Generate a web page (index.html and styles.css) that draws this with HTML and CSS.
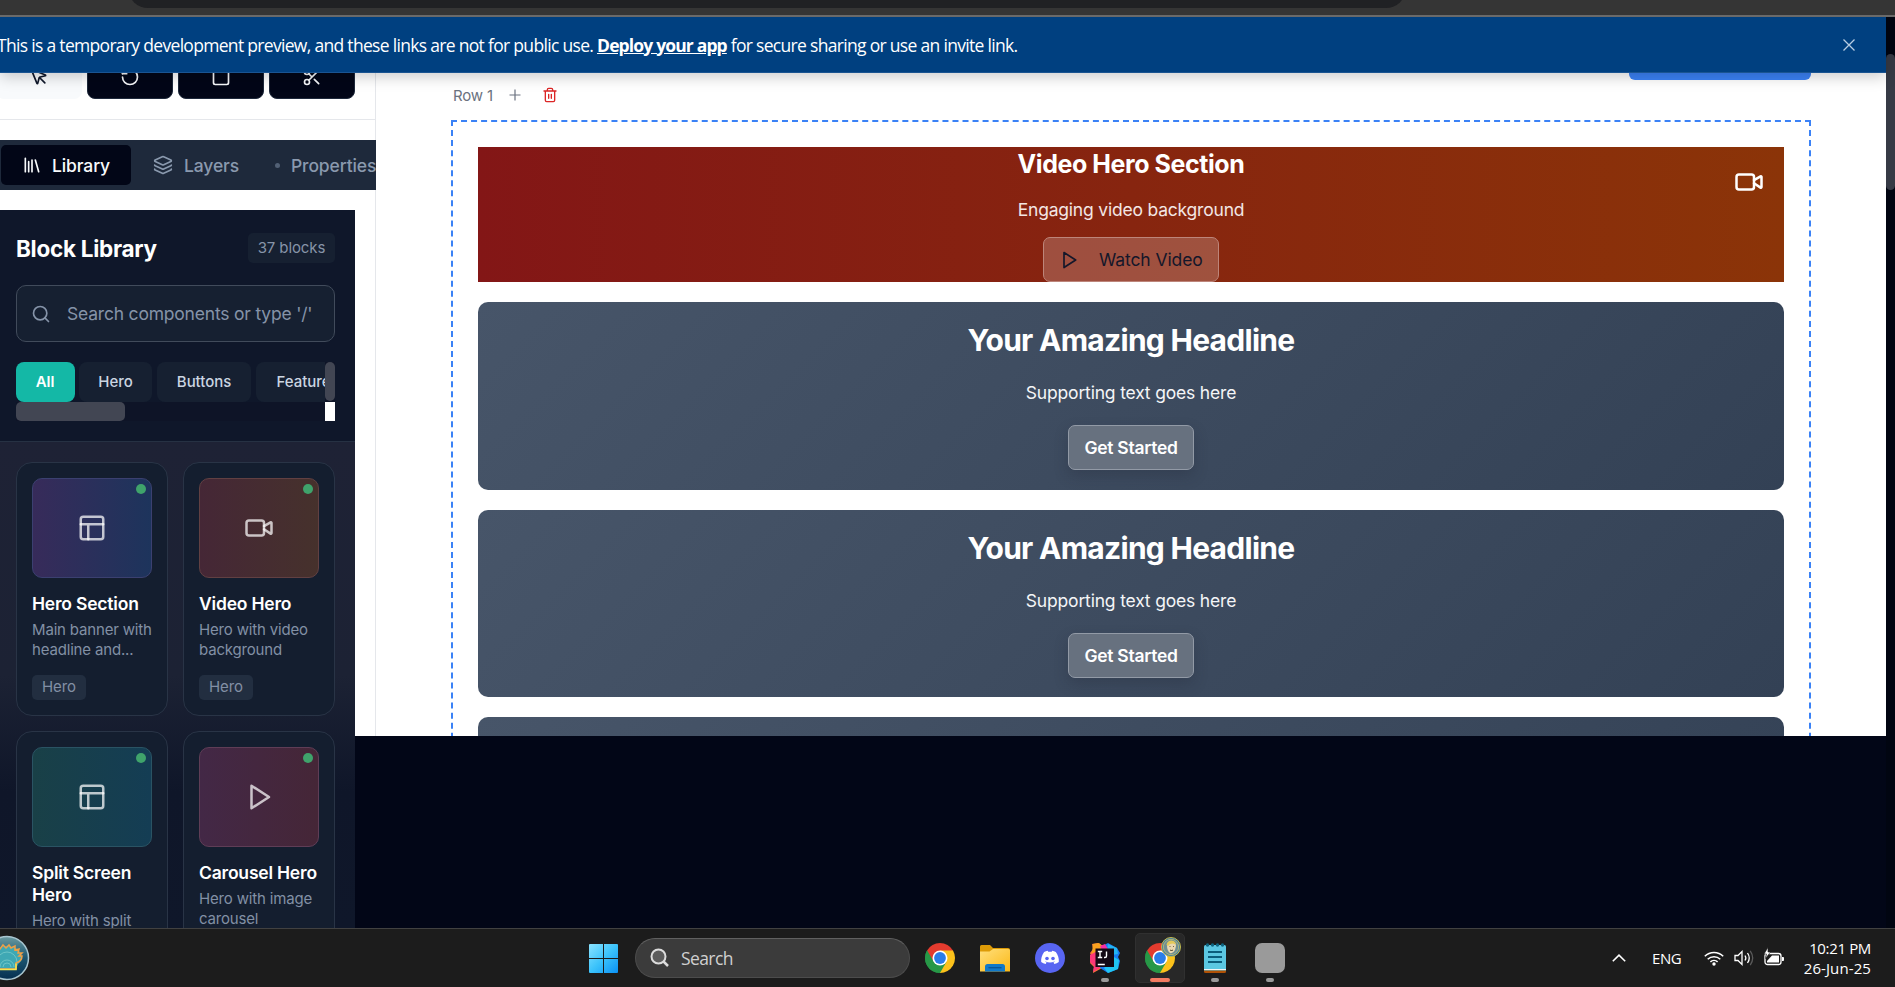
FILE: index.html
```html
<!DOCTYPE html>
<html lang="en">
<head>
<meta charset="utf-8">
<title>Page builder</title>
<link rel="stylesheet" href="styles.css">
</head>
<body>
<svg class="defs" width="0" height="0">
  <defs>
    <symbol id="i-layout" viewBox="0 0 24 24"><rect x="3" y="3" width="18" height="18" rx="2"/><path d="M3 9h18M9 21V9"/></symbol>
    <symbol id="i-video" viewBox="0 0 24 24"><path d="m16 13 5.223 3.482a.5.5 0 0 0 .777-.416V7.87a.5.5 0 0 0-.752-.432L16 10.5"/><rect x="2" y="6" width="14" height="12" rx="2"/></symbol>
    <symbol id="i-play" viewBox="0 0 24 24"><polygon points="6 3 20 12 6 21 6 3"/></symbol>
    <symbol id="i-chrome" viewBox="0 0 30 30">
      <path d="M15 15 2.01 7.5A15 15 0 0 1 27.99 7.5Z" fill="#e33b2e"/>
      <path d="M15 15 27.99 7.5A15 15 0 0 1 15 30Z" fill="#fcc21b"/>
      <path d="M15 15V30A15 15 0 0 1 2.01 7.5Z" fill="#279847"/>
      <path d="M15 7.5H27.99L21.5 18.8Z" fill="#fcc21b"/>
      <path d="M21.5 18.8 15 30 8.5 18.8Z" fill="#279847"/>
      <path d="M8.5 18.8 2.01 7.5 15 7.5Z" fill="#e33b2e"/>
      <path d="M2.01 7.5 8.5 18.8 15 30A15 15 0 0 1 2.01 7.5Z" fill="#279847"/>
      <circle cx="15" cy="15" r="7.5" fill="#fff"/><circle cx="15" cy="15" r="5.9" fill="#2a7de9"/>
    </symbol>
  </defs>
</svg>

<header class="chrome"><div class="omnibox"></div></header>

<div class="view">
  <div class="page">
    <div class="banner">
      <p class="banner-text">This is a temporary development preview, and these links are not for public use. <a>Deploy your app</a> for secure sharing or use an invite link.</p>
      <svg class="close" viewBox="0 0 12 12"><path d="M.5.5l11 11M11.500.5l-11 11"/></svg>
    </div>

    <div class="workspace">
      <aside class="sidebar">
        <div class="tools">
          <button class="tool tool-on"><svg class="ico" viewBox="0 0 24 24"><path d="M12.586 12.586 19 19"/><path d="M3.688 3.037a.497.497 0 0 0-.651.651l6.500 15.999a.501.501 0 0 0 .947-.062l1.569-6.083a2 2 0 0 1 1.448-1.479l6.124-1.579a.5.5 0 0 0 .063-.947z"/></svg></button>
          <button class="tool"><svg class="ico" viewBox="0 0 24 24"><path d="M3 12a9 9 0 1 0 9-9 9.750 9.750 0 0 0-6.740 2.740L3 8"/><path d="M3 3v5h5"/></svg></button>
          <button class="tool"><svg class="ico" viewBox="0 0 24 24"><rect x="3" y="3" width="18" height="18" rx="2"/></svg></button>
          <button class="tool"><svg class="ico" viewBox="0 0 24 24"><circle cx="6" cy="6" r="3"/><circle cx="6" cy="18" r="3"/><path d="M8.120 8.120 12 12M20 4 8.120 15.880M14.800 14.800 20 20"/></svg></button>
        </div>
        <nav class="tabs">
          <span class="tab tab-on"><svg class="ico" viewBox="0 0 24 24"><path d="m16 6 4 14M12 6v14M8 8v12M4 4v16"/></svg><span class="t-lib">Library</span></span>
          <span class="tab tab-layers"><svg class="ico" viewBox="0 0 24 24"><path d="M12.830 2.180a2 2 0 0 0-1.660 0L2.600 6.080a1 1 0 0 0 0 1.830l8.580 3.910a2 2 0 0 0 1.660 0l8.580-3.900a1 1 0 0 0 0-1.830z"/><path d="M2 12a1 1 0 0 0 .58.91l8.600 3.910a2 2 0 0 0 1.650 0l8.580-3.900A1 1 0 0 0 22 12"/><path d="M2 17a1 1 0 0 0 .58.91l8.600 3.910a2 2 0 0 0 1.650 0l8.580-3.900A1 1 0 0 0 22 17"/></svg><span>Layers</span></span>
          <span class="tab tab-props"><i class="dot"></i><span>Properties</span></span>
        </nav>

        <section class="library">
          <div class="lib-head">
            <div class="lib-title"><h2>Block Library</h2><span class="count">37 blocks</span></div>
            <div class="search"><svg class="ico" viewBox="0 0 24 24"><circle cx="11" cy="11" r="8"/><path d="m21 21-4.300-4.300"/></svg><span>Search components or type '/'</span></div>
            <div class="filters">
              <div class="chips"><span class="chip chip-all">All</span><span class="chip chip-hero">Hero</span><span class="chip chip-btn">Buttons</span><span class="chip chip-feat">Features</span></div>
              <i class="vbar"></i>
              <i class="hbar"></i>
              <i class="corner"></i>
            </div>
          </div>
          <div class="cards">
            <article class="card">
              <div class="thumb violet"><i class="live"></i><svg class="ico"><use href="#i-layout"/></svg></div>
              <h3>Hero Section</h3><p>Main banner with<br>headline and...</p><span class="tag">Hero</span>
            </article>
            <article class="card">
              <div class="thumb red"><i class="live"></i><svg class="ico"><use href="#i-video"/></svg></div>
              <h3>Video Hero</h3><p>Hero with video<br>background</p><span class="tag">Hero</span>
            </article>
            <article class="card">
              <div class="thumb teal"><i class="live"></i><svg class="ico"><use href="#i-layout"/></svg></div>
              <h3>Split Screen<br>Hero</h3><p>Hero with split</p>
            </article>
            <article class="card">
              <div class="thumb pink"><i class="live"></i><svg class="ico"><use href="#i-play"/></svg></div>
              <h3>Carousel Hero</h3><p>Hero with image<br>carousel</p>
            </article>
          </div>
        </section>
      </aside>

      <main class="canvas">
        <div class="actions"><span class="add"></span></div>
        <div class="row-head"><span class="row-name">Row 1</span>
          <svg class="plus" viewBox="0 0 12 12"><path d="M6 .5v11M.5 6h11"/></svg>
          <svg class="trash" viewBox="0 0 24 24"><path d="M3 6h18M19 6v14a2 2 0 0 1-2 2H7a2 2 0 0 1-2-2V6M8 6V4a2 2 0 0 1 2-2h4a2 2 0 0 1 2 2v2M10 11v6M14 11v6"/></svg>
        </div>
        <div class="row">
          <section class="video">
            <svg class="ico cam"><use href="#i-video"/></svg>
            <h2><span>Video Hero Section</span></h2>
            <p><span>Engaging video background</span></p>
            <button class="watch"><svg class="ico"><use href="#i-play"/></svg><span>Watch Video</span></button>
          </section>
          <section class="hero"><h1>Your Amazing Headline</h1><p>Supporting text goes here</p><button class="start">Get Started</button></section>
          <section class="hero"><h1>Your Amazing Headline</h1><p>Supporting text goes here</p><button class="start">Get Started</button></section>
          <section class="hero"></section>
        </div>
      </main>
    </div>
  </div>
  <div class="scroll"><i></i></div>
</div>

<footer class="taskbar">
  <div class="widget">
    <svg viewBox="0 0 46 46">
      <defs><linearGradient id="g1" x1="0" y1="0" x2="0" y2="1"><stop offset="0" stop-color="#6b9aa0"/><stop offset=".5" stop-color="#1c5670"/><stop offset="1" stop-color="#052f50"/></linearGradient></defs>
      <circle cx="23" cy="23" r="21.500" fill="url(#g1)" stroke="#a9c6d0" stroke-width="1.500"/>
      <path d="M14 34V30q-5-3-5-9 1-5 5-7 5-4 11-3 9 1 12 8 3 6-3 10l-2 5Z" fill="#3fa8b4"/>
      <path d="M14 34h18v-6q6-2 6-7l-3 0 3-3-4 0 1-4-4 1 0-4-4 2-2-3-3 3-3-3-3 4-3-2" fill="none" stroke="#f0a046" stroke-width="1.500"/>
      <path d="M14 34.500h18v-6" fill="none" stroke="#f6e650" stroke-width="1.500"/>
      <path d="M16 32a7 7 0 0 1 14 0M19 32a4 4 0 0 1 8 0M13 27a10 10 0 0 1 20 0" fill="none" stroke="#7fd0cf" stroke-width=".7"/>
    </svg>
  </div>
  <div class="start-menu">
    <svg class="win" viewBox="0 0 29 29"><defs><linearGradient id="w" x1="0" y1="0" x2="1" y2="1"><stop offset="0" stop-color="#8be3ff"/><stop offset=".5" stop-color="#3cc3fb"/><stop offset="1" stop-color="#0a91f5"/></linearGradient></defs><path d="M0 1q0-1 1-1h13v14H0ZM15 0h13q1 0 1 1v13H15ZM0 15h14v14H1q-1 0-1-1ZM15 15h14v13q0 1-1 1H15Z" fill="url(#w)"/></svg>
    <div class="tsearch"><svg viewBox="0 0 20 20"><circle cx="8.500" cy="8.500" r="7" fill="#5c5c5c" stroke="#dcdcdc" stroke-width="2"/><path d="m13.500 13.500 4.500 4.500" stroke="#dcdcdc" stroke-width="2.500"/></svg><span>Search</span></div>
  </div>
  <div class="apps">
    <span class="app"><svg viewBox="0 0 30 30"><use href="#i-chrome"/></svg></span>
    <span class="app"><svg viewBox="0 0 30 30"><defs><linearGradient id="f" x1="0" y1="0" x2="1" y2="1"><stop offset="0" stop-color="#ffdf7c"/><stop offset="1" stop-color="#fbb917"/></linearGradient></defs><path d="M0 3.500Q0 2 1.500 2H10l3 3h15q2 0 2 2v6H0Z" fill="#dd9b07"/><path d="M0 8.500h9.500L13 6h15.500Q30 6 30 7.500V28.500H0Z" fill="url(#f)"/><path d="M5 28.500v-5q0-2.500 2.500-2.500h15q2.500 0 2.500 2.500v5Z" fill="#1179c9"/><path d="M8.500 24.700h13" stroke="#0a5596" stroke-width="1.300"/></svg></span>
    <span class="app"><svg viewBox="0 0 30 30"><circle cx="15" cy="15" r="15" fill="#5865f2"/><path d="M20.800 8.900a14 14 0 0 0-3.600-1.100l-.5 1a13 13 0 0 0-3.500 0l-.5-1a14 14 0 0 0-3.600 1.100C6.800 12.300 5.900 15.600 6.200 18.900a14.500 14.500 0 0 0 4.400 2.200l1-1.600-1.500-.7.4-.3a10.400 10.400 0 0 0 9 0l.4.300-1.500.7 1 1.600a14.500 14.500 0 0 0 4.400-2.200c.4-3.800-.9-7-3-10Z" fill="#fff"/><circle cx="12" cy="15.500" r="1.800" fill="#5865f2"/><circle cx="18" cy="15.500" r="1.800" fill="#5865f2"/></svg></span>
    <span class="app"><svg viewBox="0 0 30 30"><path d="M2 1 8 0l5 3 2 12-3 10-9 5 1-6-4-4 2-5-2-5 3-4Z" fill="#fb7a35"/><path d="M3 1 9 0l6 5-1 8-9 2-3-5Z" fill="#f9a11f"/><path d="m0 12 7-4 6 8-3 9-7 4 1-6-4-4Z" fill="#fc3878"/><path d="M12 3 18 0l9 5 3 5-2 4 2 4-2 8-10 4-8-5Z" fill="#177bf2"/><path d="m18 1 9 4 1 6-6 1-5-5Z" fill="#22b4f4"/><path d="m24 14 5 3-1 9-10 4-4-5Z" fill="#20c5f2"/><path d="M10 3 15 1l3 5-4 5Z" fill="#f52fa3"/><rect x="5.500" y="5.500" width="18.500" height="18.500" fill="#130914"/><path d="M7.800 8.500h4.400M10 8.500v6M7.800 14.500h4.400M16.500 8.500v4.500q0 1.500-1.500 1.500h-1M7.800 21.500h7" stroke="#fff" stroke-width="1.400" fill="none"/></svg><i class="run"></i></span>
    <span class="app app-on"><svg viewBox="0 0 30 30"><use href="#i-chrome"/></svg><svg class="avatar" viewBox="0 0 20 20"><circle cx="10" cy="10" r="9.500" fill="#3e7aa6" stroke="#c3bb4e" stroke-width="1"/><circle cx="10" cy="10" r="7.700" fill="#6f8e93" stroke="#d7cc68" stroke-width=".7"/><path d="M6 8q1-4 5-4 4 1 4 5l-1 4q-2 4-5 3-3-2-3-8Z" fill="#ead7b0"/><path d="M5.500 8Q6 3.500 10.500 3.500q4 .5 4.500 4l-3-1-3 .5-2 2Z" fill="#e2c85a"/><path d="M8.500 9.500h1M12 9.500h1M9 13q1.500 1 3 0" stroke="#55492f" stroke-width=".8"/></svg><i class="run run-on"></i></span>
    <span class="app"><svg viewBox="0 0 30 30"><rect x="4" y="2" width="22" height="27" rx="1.500" fill="#5cc7e2"/><path d="M4 26h22v1H4Z" fill="#f4f4f4"/><path d="M4 27.500h22v1q0 1.500-1.500 1.500h-19Q4 30 4 28.500Z" fill="#b05206"/><path d="M8 9h14M8 14h14M8 19h14" stroke="#0b5d7c" stroke-width="1.800"/><g fill="#0f6480"><circle cx="7.500" cy="2" r="1.700"/><circle cx="12.500" cy="2" r="1.700"/><circle cx="17.500" cy="2" r="1.700"/><circle cx="22.500" cy="2" r="1.700"/></g></svg><i class="run"></i></span>
    <span class="app"><i class="blank"></i><i class="run"></i></span>
  </div>
  <div class="tray">
    <svg class="chev" viewBox="0 0 14 8"><path d="m.8 7.200 6.200-6 6.200 6"/></svg>
    <span class="lang">ENG</span>
    <svg class="wifi" viewBox="0 0 20 16"><path d="M.8 6.300a13 13 0 0 1 18.400 0M3.700 9.200a9 9 0 0 1 12.600 0M6.400 11.900a5.200 5.200 0 0 1 7.200 0"/><circle cx="10" cy="14" r="1.700"/></svg>
    <svg class="vol" viewBox="0 0 20 18"><path d="M1 6.500h3L8 2.500v13l-4-4H1Z"/><path d="M11 6.500q1.700 2.500 0 5M13.500 4q3.500 5 0 10"/><path class="dim" d="M16.200 1.800q5 7.200 0 14.400"/></svg>
    <svg class="bat" viewBox="0 0 20 18"><rect x="1" y="4.500" width="16" height="11" rx="2.500"/><path class="fill" d="M3 13.500V12l5-5.500h7v7H3ZM18 8h1.200q.8 0 .8 1v2q0 1-.8 1H18Z"/><path class="bolt" d="M4-1.500 0 5h2.500L1.500 9.500 6.500 3H4Z"/></svg>
    <div class="clock"><span>10:21 PM</span><span class="date">26-Jun-25</span></div>
  </div>
</footer>
</body>
</html>
```
FILE: styles.css
```css
* { box-sizing: border-box; }
body { margin: 0; width: 1895px; height: 987px; overflow: hidden; display: flex; flex-direction: column; background: #020617; font-family: Inter, "Liberation Sans", sans-serif; }
h1, h2, h3, p { margin: 0; }
button { margin: 0; padding: 0; border: 0; font: inherit; }
.defs { position: absolute; }
.ico { width: 20px; height: 20px; flex: none; fill: none; stroke: currentColor; stroke-width: 2; stroke-linecap: round; stroke-linejoin: round; }

/* Browser frame */
.chrome { flex: none; height: 17px; background: #353535; border-bottom: 2px solid #6a6a6a; overflow: hidden; padding-left: 128px; }
.omnibox { width: 1278px; height: 40px; margin-top: -32px; border-radius: 20px; background: #202124; }
.view { flex: none; height: 911px; display: flex; overflow: hidden; }
.page { position: relative; width: 1886px; }
.scroll { width: 9px; padding-top: 37px; background: #010511; }
.scroll i { display: block; height: 136px; border-radius: 5px; background: #363a45; }

.banner { position: absolute; z-index: 5; top: 0; left: 0; width: 1886px; height: 56px; display: flex; align-items: center; justify-content: space-between; padding: 0 31px 0 0; background: #004080; border-bottom: 1px solid #1a5491; box-shadow: 0 4px 14px rgba(0,0,0,.2); color: #fff; }
.banner-text { margin-left: -3px; font: 17.500px "Open Sans", "Noto Sans", sans-serif; letter-spacing: -.69px; white-space: nowrap; }
.banner-text a { font-weight: 700; letter-spacing: -.85px; text-decoration: underline; }
.close { width: 12px; height: 12px; stroke: #b9cde2; stroke-width: 1.300; fill: none; }

.workspace { display: flex; width: 1886px; height: 719px; background: #fff; }

/* Sidebar */
.sidebar { flex: none; width: 376px; height: 719px; border-right: 1px solid #e5e7eb; }
.tools { display: flex; gap: 5px; height: 103px; width: 375px; padding: 37px 0 20px; border-bottom: 1px solid #e5e7eb; overflow: hidden; }
.tool { flex: none; width: 86px; height: 45px; display: flex; align-items: center; justify-content: center; border-radius: 8px; background: #020617; border: 1px solid #1e293b; color: #f8fafc; }
.tool-on { margin-left: -4px; background: #f8fafc; border-color: #f8fafc; color: #0f172a; }
.tabs { display: flex; align-items: center; width: 376px; height: 50px; margin-top: 20px; padding-left: 1px; background: #1e293b; overflow: hidden; font-size: 17.500px; font-weight: 500; letter-spacing: -.12px; color: #8a99ae; white-space: nowrap; }
.tab { flex: none; display: flex; align-items: center; height: 40px; }
.tab-on { width: 130px; padding-left: 21px; gap: 10px; background: #020617; border-radius: 5px; color: #f8fafc; }
.tab-layers { width: 144px; padding-left: 22px; gap: 11px; }
.tab-props { gap: 11px; }
.dot { width: 5px; height: 5px; border-radius: 50%; background: #526075; }

.library { width: 355px; height: 718px; margin-top: 20px; overflow: hidden; background: #0f172a; }
.lib-head { height: 232px; padding: 23px 20px 0 16px; border-bottom: 1px solid #263143; }
.lib-title { display: flex; align-items: center; justify-content: space-between; height: 30px; }
.lib-title h2 { font-size: 22.500px; font-weight: 700; letter-spacing: -.28px; color: #fff; }
.count { width: 87px; height: 30px; line-height: 29px; border-radius: 5px; text-align: center; font-size: 15px; letter-spacing: -.1px; color: #8794a8; background: #162031; }
.search { display: flex; align-items: center; gap: 16px; height: 57px; margin-top: 22px; padding-left: 14px; border: 1px solid #414b5b; border-radius: 10px; background: #162031; color: #8593a8; font-size: 17.500px; letter-spacing: -.2px; white-space: nowrap; }
.filters { display: grid; grid-template-columns: 309px 10px; grid-template-rows: 40px 19px; margin-top: 20px; background: #0e1427; }
.chips { display: flex; overflow: hidden; background: #0f172a; font-size: 15px; font-weight: 500; letter-spacing: -.05px; color: #cbd5e1; }
.chip { flex: none; height: 40px; line-height: 39px; border-radius: 8px; background: #162031; text-align: center; }
.chip-all { width: 59px; margin-right: 4px; padding-right: 1px; background: #14b8a6; color: #fff; font-weight: 600; }
.chip-hero { width: 73px; margin-right: 5px; }
.chip-btn { width: 94px; margin-right: 5px; }
.chip-feat { width: 103px; }
.vbar { height: 39px; border-radius: 5px; background: #424653; }
.hbar { width: 109px; border-radius: 5px; background: #424653; }
.corner { background: #fff; }

.cards { display: grid; grid-template-columns: 152px 152px; grid-auto-rows: 254px; gap: 15px; height: 486px; padding: 20px 20px 0 16px; background: linear-gradient(#1e2235 0, #1c2234 48%, #0f1629 72%, #0f172a 100%); }
.card { padding: 15px; border: 1px solid #293446; border-radius: 16px; background: #141e2f; }
.card:nth-child(n+3) { height: 280px; }
.thumb { position: relative; display: flex; align-items: center; justify-content: center; width: 120px; height: 100px; border: 1px solid; border-radius: 10px; color: rgba(255,255,255,.72); }
.thumb .ico { width: 30px; height: 30px; }
.violet { background: linear-gradient(90deg, #372b5a, #1d345c); border-color: #3b4070; }
.red { background: linear-gradient(90deg, #452736, #46312c); border-color: #614042; }
.teal { background: linear-gradient(90deg, #194047, #143d54); border-color: #2a5363; }
.pink { background: linear-gradient(90deg, #432846, #452637); border-color: #5f3d56; }
.live { position: absolute; top: 5px; right: 5px; width: 10px; height: 10px; border-radius: 50%; background: #3fa36b; }
.card h3 { margin-top: 15px; font-size: 17.500px; line-height: 22px; font-weight: 600; letter-spacing: -.2px; color: #fff; white-space: nowrap; }
.card p { margin-top: 5px; font-size: 15px; line-height: 20px; letter-spacing: -.17px; color: #8290a5; white-space: nowrap; }
.tag { display: block; width: 54px; height: 25px; margin-top: 15px; line-height: 24px; border-radius: 5px; text-align: center; font-size: 15px; letter-spacing: -.1px; color: #8290a5; background: #222e40; }

/* Canvas */
.canvas { width: 1510px; height: 719px; padding: 0 75px; overflow: hidden; }
.actions { display: flex; justify-content: flex-end; height: 63px; }
.add { width: 182px; border-radius: 6px; background: #3b82f6; }
.row-head { display: flex; align-items: center; height: 30px; margin-bottom: 10px; padding-left: 2px; color: #6b7280; }
.row-name { width: 56px; font-size: 15px; letter-spacing: -.15px; }
.plus { width: 12px; height: 12px; fill: none; stroke: #6b7280; stroke-width: 1.200; }
.trash { width: 16px; height: 16px; margin-left: 21px; fill: none; stroke: #dc2626; stroke-width: 2; stroke-linecap: round; stroke-linejoin: round; }
.row { display: flex; flex-direction: column; gap: 20px; height: 900px; padding: 25px; border: 2px dashed #3b82f6; }
.video { position: relative; flex: none; height: 135px; display: flex; flex-direction: column; align-items: center; background: linear-gradient(90deg, #831616, #8b3408); color: #fff; }
.video h2 { height: 35px; line-height: 35px; font-size: 25px; font-weight: 700; letter-spacing: -.43px; }
.video p { height: 25px; margin-top: 15px; line-height: 25px; font-size: 17.500px; letter-spacing: -.2px; color: #f3e6e4; }
.cam { position: absolute; top: 20px; right: 20px; width: 30px; height: 30px; }
.watch { display: flex; align-items: center; width: 176px; height: 45px; margin-top: 15px; padding-left: 15px; border: 1px solid #bd857a; border-radius: 7px; background: rgba(255,255,255,.2); color: #14172a; font-size: 17.500px; letter-spacing: -.1px; }
.watch span { margin-left: 20px; }
.hero { flex: none; height: 188px; display: flex; flex-direction: column; align-items: center; border-radius: 10px; background: linear-gradient(135deg, #475569, #334155); color: #fff; }
.hero + .hero { height: 187px; }
.hero h1 { margin-top: 19px; height: 38px; line-height: 38px; font-size: 30px; font-weight: 700; letter-spacing: -.72px; }
.hero p { margin-top: 21px; height: 25px; line-height: 25px; font-size: 17.500px; letter-spacing: -.18px; color: #f4f5f7; }
.start { width: 126px; height: 45px; margin-top: 20px; border: 1px solid #929aa6; border-radius: 7px; background: #67717f; box-shadow: 0 6px 14px rgba(30,35,50,.25); color: #fff; font-size: 17.500px; font-weight: 600; letter-spacing: -.28px; }

/* Taskbar */
.taskbar { flex: none; display: flex; align-items: center; height: 59px; background: #1c1c1c; border-top: 1px solid #414141; color: #fff; font-family: "Open Sans", "Noto Sans", sans-serif; }
.widget { width: 589px; height: 46px; }
.widget svg { width: 46px; height: 46px; margin-left: -16px; }
.start-menu { display: flex; align-items: center; gap: 17px; }
.win { width: 29px; height: 29px; }
.tsearch { display: flex; align-items: center; width: 275px; height: 40px; padding-left: 14px; gap: 11px; border: 1px solid #4c4c4c; border-top-color: #606060; border-radius: 20px; background: #3b3b3b; color: #d0d0d0; font-size: 17.500px; letter-spacing: -.6px; }
.tsearch svg { width: 20px; height: 20px; }
.apps { display: flex; gap: 5px; margin-left: 5px; }
.app { position: relative; width: 50px; height: 50px; display: flex; align-items: center; justify-content: center; border-radius: 5px; }
.app svg { width: 30px; height: 30px; }
.app-on { background: #282828; border: 1px solid #303030; }
.app .avatar { position: absolute; top: 3px; right: 3px; width: 20px; height: 20px; }
.run { position: absolute; bottom: 1px; left: 21px; width: 8px; height: 4px; border-radius: 2px; background: #9a9a9a; }
.run-on { left: 14px; bottom: 0; width: 20px; background: #f47c62; }
.blank { width: 30px; height: 30px; border-radius: 7px; background: #9a9a9a; }
.tray { display: flex; align-items: center; margin-left: auto; padding-right: 24px; }
.chev { width: 14px; height: 8px; fill: none; stroke: #fff; stroke-width: 1.600; }
.lang { width: 30px; margin: 0 22px 0 26px; font-size: 15px; letter-spacing: -.4px; }
.wifi { width: 20px; height: 16px; fill: none; stroke: #fff; stroke-width: 1.500; }
.wifi circle { fill: #fff; stroke: none; }
.vol { width: 20px; height: 18px; margin-left: 10px; fill: none; stroke: #fff; stroke-width: 1.300; }
.dim { stroke: #5a5a5a; }
.bat { width: 20px; height: 18px; margin-left: 10px; fill: none; stroke: #fff; stroke-width: 1.300; overflow: visible; }
.bat .fill { fill: #fff; stroke: none; }
.bat .bolt { fill: #fff; stroke: #1c1c1c; stroke-width: .6; }
.clock { display: flex; flex-direction: column; align-items: flex-end; width: 87px; font-size: 15px; line-height: 20px; letter-spacing: -.35px; white-space: nowrap; }
.date { letter-spacing: .1px; }
```
